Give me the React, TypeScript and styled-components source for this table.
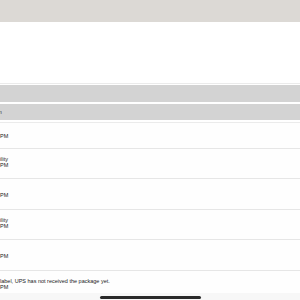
import * as React from 'react'
import styled, { createGlobalStyle } from 'styled-components'

const GlobalStyle = createGlobalStyle`
  html, body {
    margin: 0;
    padding: 0;
    background: #fff;
    overflow: hidden;
  }
  body {
    font-family: "Liberation Sans", Arial, sans-serif;
  }
`

const Page = styled.div`
  display: flex;
  flex-direction: column;
  width: 300px;
  height: 300px;
  overflow: hidden;
`

const TopBar = styled.div`
  height: 22px;
  background: #dcd9d5;
  flex-shrink: 0;
`

const Blank = styled.div`
  height: 61px;
  border-bottom: 1px solid #ebebeb;
  flex-shrink: 0;
`

const Band = styled.div<{ $h: number; $gap: number }>`
  height: ${(p) => p.$h}px;
  margin-top: ${(p) => p.$gap}px;
  background: #d3d3d3;
  flex-shrink: 0;
  display: flex;
  align-items: center;
  font-size: 5px;
  color: #333;
  margin-left: -1px;
`

const List = styled.div`
  margin-top: 2px;
  border-top: 1px solid #ebebeb;
  display: flex;
  flex-direction: column;
  flex: 1;
  min-height: 0;
  overflow: hidden;
`

const Row = styled.div<{ $h: number; $pad?: number }>`
  height: ${(p) => p.$h}px;
  flex-shrink: 0;
  box-sizing: border-box;
  border-bottom: 1px solid #e6e6e6;
  background: #fefefe;
  padding-top: ${(p) => p.$pad ?? 7}px;
  display: flex;
  flex-direction: column;
`

const Line = styled.div`
  font-size: 5.5px;
  line-height: 6px;
  height: 6px;
  color: #1a1a1a;
  white-space: nowrap;
`

const HomeArea = styled.div`
  height: 7px;
  background: #f7f7f7;
  flex-shrink: 0;
  display: flex;
  justify-content: center;
  padding-top: 3px;
  box-sizing: border-box;
`

const HomeIndicator = styled.div`
  width: 101px;
  height: 3px;
  border-radius: 2px;
  background: #2a2a2a;
`

const rows = [
  { h: 26, lines: ['', 'PM'], pad: 4 },
  { h: 30, lines: ['ility', 'PM'] },
  { h: 31, lines: ['', 'PM'] },
  { h: 30, lines: ['ility', 'PM'] },
  { h: 31, lines: ['', 'PM'] },
  { h: 23, lines: ['label, UPS has not received the package yet.', 'PM'] },
]

const App = () => {
  return (
    <React.Fragment>
      <GlobalStyle />
      <Page>
        <TopBar />
        <Blank />
        <Band $h={17} $gap={1} />
        <Band $h={16} $gap={2}>n</Band>
        <List>
          {rows.map((r, i) => (
            <Row key={i} $h={r.h} $pad={r.pad}>
              {r.lines.map((l, j) => (
                <Line key={j}>{l}</Line>
              ))}
            </Row>
          ))}
        </List>
        <HomeArea>
          <HomeIndicator />
        </HomeArea>
      </Page>
    </React.Fragment>
  )
}

export default App
